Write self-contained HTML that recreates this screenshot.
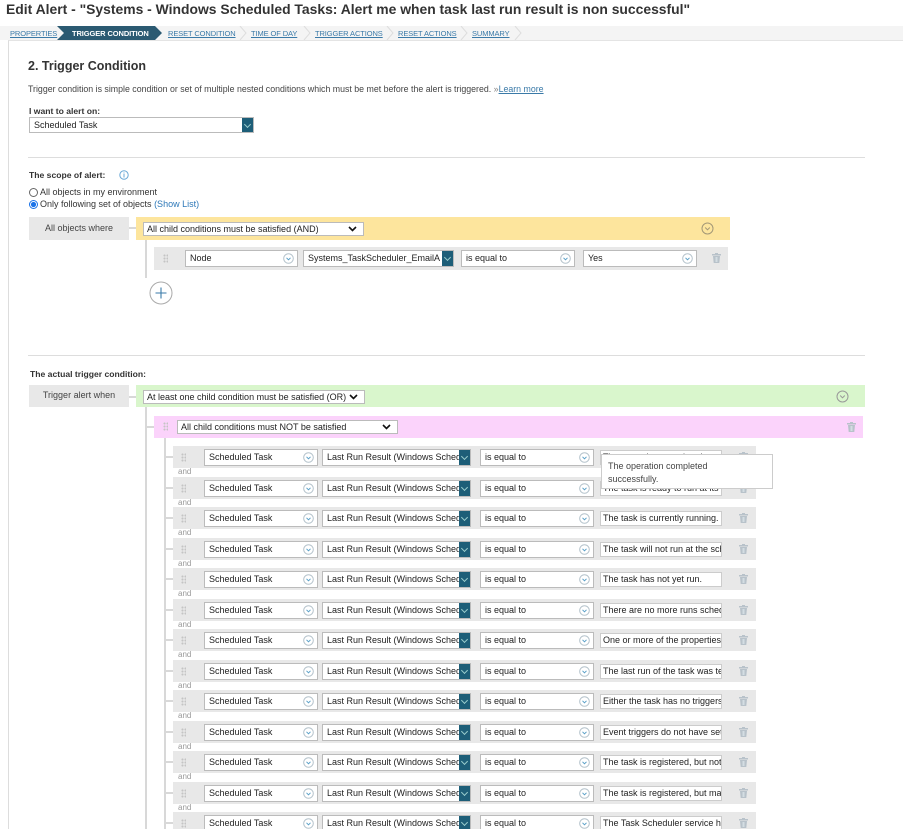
<!DOCTYPE html>
<html><head><meta charset="utf-8">
<style>
*{margin:0;padding:0;box-sizing:border-box}
html,body{width:903px;height:829px;overflow:hidden}
body{background:#fff;font-family:"Liberation Sans",Arial,sans-serif;color:#222;position:relative}
.a{position:absolute}
.t{font-size:9px;white-space:nowrap}
.crumb{position:absolute;top:29px;font-size:7.5px;color:#3a7aa8;text-decoration:underline;white-space:nowrap;letter-spacing:-0.1px}
.sep{position:absolute;top:26px;width:8px;height:14px}
.sel{position:absolute;height:17px;border:1px solid #bbb;background:#fff;font-size:9px;line-height:15px;padding-left:4px;overflow:hidden;white-space:nowrap;color:#222}
.ci{position:absolute;right:3px;top:2px;width:11px;height:11px}
.tb{position:absolute;right:-1px;top:-1px;width:12px;height:17px;background:#1d5e78}
.tb:after{content:"";position:absolute;left:3px;top:5px;width:4px;height:4px;border-right:1px solid #9cc;border-bottom:1px solid #9cc;transform:rotate(45deg)}
.inp{position:absolute;height:15px;border:1px solid #ccc;background:#fff;font-size:9px;line-height:13px;padding-left:2px;overflow:hidden;white-space:nowrap;color:#222}
.row{position:absolute;left:173px;width:583px;height:22px;background:#e8e8e8}
.and{position:absolute;left:178px;font-size:8px;color:#999}
.h{position:absolute;width:5px;height:9px;background-image:radial-gradient(circle,#c4c4c4 1px,transparent 1.1px);background-size:3px 3px}
.tr{position:absolute;width:9px;height:10px}
.vl{position:absolute;background:#d8d8d8;width:2px}
.hl{position:absolute;background:#d8d8d8;height:2px}
.dd{position:absolute;height:14px;border:1px solid #bbb;background:#fff;font-size:9px;line-height:12px;padding-left:3px;white-space:nowrap}
.dd svg{position:absolute;right:6px;top:3px}
</style></head><body>
<svg width="0" height="0" style="position:absolute"><defs>
<g id="c"><circle cx="5.5" cy="5.5" r="4.8" fill="#fff" stroke="#b5c3cc" stroke-width="1"/><path d="M3.5 4.8 L5.5 6.8 L7.5 4.8" fill="none" stroke="#5aa0c8" stroke-width="1"/></g>
<g id="tr"><rect x="0" y="1" width="9" height="1.5" fill="#b8c2ca"/><rect x="3" y="0" width="3" height="1.5" fill="#b8c2ca"/><path d="M1 3 H8 L7.3 10 H1.7 Z" fill="#b8c2ca"/><rect x="3.5" y="4" width="2" height="5" fill="#d4dde3"/></g>
</defs></svg>

<div class="a" style="left:6px;top:1px;font-size:13.9px;font-weight:bold;color:#333;white-space:nowrap">Edit Alert - "Systems - Windows Scheduled Tasks: Alert me when task last run result is non successful"</div>

<div class="a" style="left:0;top:26px;width:903px;height:14px;background:#f4f4f4"></div>
<div class="crumb" style="left:10px">PROPERTIES</div>
<svg class="a" style="left:57px;top:26px" width="110" height="14"><path d="M0 0 H98 L105 7 L98 14 H0 L7 7 Z" fill="#2b5a72"/></svg>
<div class="crumb" style="left:72px;color:#fff;text-decoration:none;font-weight:bold">TRIGGER CONDITION</div>
<div class="crumb" style="left:168px">RESET CONDITION</div>
<svg class="sep" style="left:239px"><path d="M1 0 L7 7 L1 14" fill="none" stroke="#ddd"/></svg>
<div class="crumb" style="left:251px">TIME OF DAY</div>
<svg class="sep" style="left:303px"><path d="M1 0 L7 7 L1 14" fill="none" stroke="#ddd"/></svg>
<div class="crumb" style="left:315px">TRIGGER ACTIONS</div>
<svg class="sep" style="left:386px"><path d="M1 0 L7 7 L1 14" fill="none" stroke="#ddd"/></svg>
<div class="crumb" style="left:398px">RESET ACTIONS</div>
<svg class="sep" style="left:460px"><path d="M1 0 L7 7 L1 14" fill="none" stroke="#ddd"/></svg>
<div class="crumb" style="left:472px">SUMMARY</div>
<svg class="sep" style="left:514px"><path d="M1 0 L7 7 L1 14" fill="none" stroke="#ddd"/></svg>

<div class="a" style="left:8px;top:40px;width:895px;height:789px;border-left:1px solid #ddd;border-top:1px solid #e4e4e4"></div>

<div class="a" style="left:28px;top:59px;font-size:12.5px;font-weight:bold;color:#333">2. Trigger Condition</div>
<div class="a t" style="left:28px;top:84px;color:#444;font-size:8.8px">Trigger condition is simple condition or set of multiple nested conditions which must be met before the alert is triggered. <span style="color:#888">»</span><span style="color:#3a7aa8;text-decoration:underline">Learn more</span></div>
<div class="a t" style="left:29px;top:106px;font-weight:bold;color:#333;font-size:8.6px">I want to alert on:</div>
<div class="sel" style="left:29px;top:117px;width:225px;height:16px">Scheduled Task<div class="tb" style="height:16px"></div></div>

<div class="a" style="left:28px;top:157px;width:837px;height:1px;background:#ddd"></div>
<div class="a t" style="left:29px;top:170px;font-weight:bold;color:#333;font-size:8.6px">The scope of alert:</div>
<svg class="a" style="left:119px;top:170px" width="10" height="10"><circle cx="5" cy="5" r="4.2" fill="none" stroke="#6aa8d6"/><rect x="4.5" y="4" width="1" height="3.5" fill="#6aa8d6"/><rect x="4.5" y="2.5" width="1" height="1" fill="#6aa8d6"/></svg>
<svg class="a" style="left:29px;top:188px" width="9" height="9"><circle cx="4.5" cy="4.5" r="4" fill="#fff" stroke="#666"/></svg>
<div class="a t" style="left:40px;top:187px;color:#333">All objects in my environment</div>
<svg class="a" style="left:29px;top:200px" width="9" height="9"><circle cx="4.5" cy="4.5" r="4" fill="#fff" stroke="#1a73e8"/><circle cx="4.5" cy="4.5" r="2.6" fill="#1a73e8"/></svg>
<div class="a t" style="left:40px;top:199px;color:#333">Only following set of objects <span style="color:#2d78b8">(Show List)</span></div>

<div class="a t" style="left:29px;top:217px;width:100px;height:23px;background:#e8e8e8;text-align:center;line-height:22px;color:#444">All objects where</div>
<div class="hl" style="left:129px;top:227px;width:7px"></div>
<div class="a" style="left:136px;top:217px;width:594px;height:23px;background:#fde59d"></div>
<div class="dd" style="left:143px;top:222px;width:221px">All child conditions must be satisfied (AND)<svg width="9" height="6"><path d="M1 1 L4.5 4.5 L8 1" fill="none" stroke="#111" stroke-width="1.6"/></svg></div>
<svg class="a" style="left:701px;top:222px" width="13" height="13"><circle cx="6.5" cy="6.5" r="5.5" fill="none" stroke="#a39876"/><path d="M4.2 5.5 L6.5 7.8 L8.8 5.5" fill="none" stroke="#a39876"/></svg>
<div class="vl" style="left:145px;top:240px;height:38px"></div>
<div class="a" style="left:154px;top:247px;width:574px;height:23px;background:#e8e8e8"></div>
<div class="h" style="left:163px;top:254px"></div>
<div class="sel" style="left:185px;top:250px;width:113px">Node<svg class="ci"><use href="#c"/></svg></div>
<div class="sel" style="left:303px;top:250px;width:151px">Systems_TaskScheduler_EmailA<div class="tb"></div></div>
<div class="sel" style="left:461px;top:250px;width:114px">is equal to<svg class="ci"><use href="#c"/></svg></div>
<div class="sel" style="left:583px;top:250px;width:114px">Yes<svg class="ci"><use href="#c"/></svg></div>
<svg class="tr" style="left:712px;top:253px"><use href="#tr"/></svg>
<svg class="a" style="left:149px;top:281px" width="24" height="24"><circle cx="12" cy="12" r="11" fill="#fff" stroke="#aaa"/><path d="M12 6.5 V17.5 M6.5 12 H17.5" stroke="#3a7aa8" stroke-width="1.1"/></svg>

<div class="a" style="left:28px;top:355px;width:837px;height:1px;background:#ddd"></div>
<div class="a t" style="left:30px;top:369px;font-weight:bold;color:#333;font-size:8.6px">The actual trigger condition:</div>
<div class="a t" style="left:29px;top:385px;width:100px;height:22px;background:#e8e8e8;text-align:center;line-height:21px;color:#444">Trigger alert when</div>
<div class="hl" style="left:129px;top:396px;width:7px"></div>
<div class="a" style="left:136px;top:385px;width:729px;height:22px;background:#d9f6cc"></div>
<div class="dd" style="left:143px;top:390px;width:222px">At least one child condition must be satisfied (OR)<svg width="9" height="6"><path d="M1 1 L4.5 4.5 L8 1" fill="none" stroke="#111" stroke-width="1.6"/></svg></div>
<svg class="a" style="left:836px;top:390px" width="13" height="13"><circle cx="6.5" cy="6.5" r="5.5" fill="none" stroke="#999"/><path d="M4.2 5.5 L6.5 7.8 L8.8 5.5" fill="none" stroke="#999"/></svg>
<div class="vl" style="left:145px;top:407px;height:422px"></div>
<div class="hl" style="left:146px;top:426px;width:8px"></div>
<div class="a" style="left:154px;top:416px;width:709px;height:22px;background:#fbd3fb"></div>
<div class="h" style="left:163px;top:422px"></div>
<div class="dd" style="left:177px;top:420px;width:221px">All child conditions must NOT be satisfied<svg width="9" height="6"><path d="M1 1 L4.5 4.5 L8 1" fill="none" stroke="#111" stroke-width="1.6"/></svg></div>
<svg class="tr" style="left:847px;top:422px"><use href="#tr"/></svg>
<div class="vl" style="left:164px;top:438px;height:391px"></div>

<div class="row" style="top:446px"><div class="h" style="left:8px;top:7px"></div><div class="sel" style="left:31px;top:3px;width:114px">Scheduled Task<svg class="ci"><use href="#c"/></svg></div><div class="sel" style="left:149px;top:3px;width:149px">Last Run Result (Windows Sched<div class="tb"></div></div><div class="sel" style="left:307px;top:3px;width:114px">is equal to<svg class="ci"><use href="#c"/></svg></div><div class="inp" style="left:427px;top:4px;width:122px">The operation completed successfully.</div><svg class="tr" style="left:566px;top:6px"><use href="#tr"/></svg></div>
<div class="hl" style="left:165px;top:456px;width:8px"></div>
<div class="and" style="top:467px">and</div>
<div class="row" style="top:476.5px"><div class="h" style="left:8px;top:7px"></div><div class="sel" style="left:31px;top:3px;width:114px">Scheduled Task<svg class="ci"><use href="#c"/></svg></div><div class="sel" style="left:149px;top:3px;width:149px">Last Run Result (Windows Sched<div class="tb"></div></div><div class="sel" style="left:307px;top:3px;width:114px">is equal to<svg class="ci"><use href="#c"/></svg></div><div class="inp" style="left:427px;top:4px;width:122px">The task is ready to run at its next scheduled time.</div><svg class="tr" style="left:566px;top:6px"><use href="#tr"/></svg></div>
<div class="hl" style="left:165px;top:487px;width:8px"></div>
<div class="and" style="top:498px">and</div>
<div class="row" style="top:507px"><div class="h" style="left:8px;top:7px"></div><div class="sel" style="left:31px;top:3px;width:114px">Scheduled Task<svg class="ci"><use href="#c"/></svg></div><div class="sel" style="left:149px;top:3px;width:149px">Last Run Result (Windows Sched<div class="tb"></div></div><div class="sel" style="left:307px;top:3px;width:114px">is equal to<svg class="ci"><use href="#c"/></svg></div><div class="inp" style="left:427px;top:4px;width:122px">The task is currently running.</div><svg class="tr" style="left:566px;top:6px"><use href="#tr"/></svg></div>
<div class="hl" style="left:165px;top:517px;width:8px"></div>
<div class="and" style="top:528px">and</div>
<div class="row" style="top:537.5px"><div class="h" style="left:8px;top:7px"></div><div class="sel" style="left:31px;top:3px;width:114px">Scheduled Task<svg class="ci"><use href="#c"/></svg></div><div class="sel" style="left:149px;top:3px;width:149px">Last Run Result (Windows Sched<div class="tb"></div></div><div class="sel" style="left:307px;top:3px;width:114px">is equal to<svg class="ci"><use href="#c"/></svg></div><div class="inp" style="left:427px;top:4px;width:122px">The task will not run at the scheduled times</div><svg class="tr" style="left:566px;top:6px"><use href="#tr"/></svg></div>
<div class="hl" style="left:165px;top:548px;width:8px"></div>
<div class="and" style="top:559px">and</div>
<div class="row" style="top:568px"><div class="h" style="left:8px;top:7px"></div><div class="sel" style="left:31px;top:3px;width:114px">Scheduled Task<svg class="ci"><use href="#c"/></svg></div><div class="sel" style="left:149px;top:3px;width:149px">Last Run Result (Windows Sched<div class="tb"></div></div><div class="sel" style="left:307px;top:3px;width:114px">is equal to<svg class="ci"><use href="#c"/></svg></div><div class="inp" style="left:427px;top:4px;width:122px">The task has not yet run.</div><svg class="tr" style="left:566px;top:6px"><use href="#tr"/></svg></div>
<div class="hl" style="left:165px;top:578px;width:8px"></div>
<div class="and" style="top:589px">and</div>
<div class="row" style="top:598.5px"><div class="h" style="left:8px;top:7px"></div><div class="sel" style="left:31px;top:3px;width:114px">Scheduled Task<svg class="ci"><use href="#c"/></svg></div><div class="sel" style="left:149px;top:3px;width:149px">Last Run Result (Windows Sched<div class="tb"></div></div><div class="sel" style="left:307px;top:3px;width:114px">is equal to<svg class="ci"><use href="#c"/></svg></div><div class="inp" style="left:427px;top:4px;width:122px">There are no more runs scheduled for this task.</div><svg class="tr" style="left:566px;top:6px"><use href="#tr"/></svg></div>
<div class="hl" style="left:165px;top:609px;width:8px"></div>
<div class="and" style="top:620px">and</div>
<div class="row" style="top:629px"><div class="h" style="left:8px;top:7px"></div><div class="sel" style="left:31px;top:3px;width:114px">Scheduled Task<svg class="ci"><use href="#c"/></svg></div><div class="sel" style="left:149px;top:3px;width:149px">Last Run Result (Windows Sched<div class="tb"></div></div><div class="sel" style="left:307px;top:3px;width:114px">is equal to<svg class="ci"><use href="#c"/></svg></div><div class="inp" style="left:427px;top:4px;width:122px">One or more of the properties that are needed</div><svg class="tr" style="left:566px;top:6px"><use href="#tr"/></svg></div>
<div class="hl" style="left:165px;top:639px;width:8px"></div>
<div class="and" style="top:650px">and</div>
<div class="row" style="top:659.5px"><div class="h" style="left:8px;top:7px"></div><div class="sel" style="left:31px;top:3px;width:114px">Scheduled Task<svg class="ci"><use href="#c"/></svg></div><div class="sel" style="left:149px;top:3px;width:149px">Last Run Result (Windows Sched<div class="tb"></div></div><div class="sel" style="left:307px;top:3px;width:114px">is equal to<svg class="ci"><use href="#c"/></svg></div><div class="inp" style="left:427px;top:4px;width:122px">The last run of the task was terminated by the user.</div><svg class="tr" style="left:566px;top:6px"><use href="#tr"/></svg></div>
<div class="hl" style="left:165px;top:670px;width:8px"></div>
<div class="and" style="top:681px">and</div>
<div class="row" style="top:690px"><div class="h" style="left:8px;top:7px"></div><div class="sel" style="left:31px;top:3px;width:114px">Scheduled Task<svg class="ci"><use href="#c"/></svg></div><div class="sel" style="left:149px;top:3px;width:149px">Last Run Result (Windows Sched<div class="tb"></div></div><div class="sel" style="left:307px;top:3px;width:114px">is equal to<svg class="ci"><use href="#c"/></svg></div><div class="inp" style="left:427px;top:4px;width:122px">Either the task has no triggers or the existing</div><svg class="tr" style="left:566px;top:6px"><use href="#tr"/></svg></div>
<div class="hl" style="left:165px;top:700px;width:8px"></div>
<div class="and" style="top:711px">and</div>
<div class="row" style="top:720.5px"><div class="h" style="left:8px;top:7px"></div><div class="sel" style="left:31px;top:3px;width:114px">Scheduled Task<svg class="ci"><use href="#c"/></svg></div><div class="sel" style="left:149px;top:3px;width:149px">Last Run Result (Windows Sched<div class="tb"></div></div><div class="sel" style="left:307px;top:3px;width:114px">is equal to<svg class="ci"><use href="#c"/></svg></div><div class="inp" style="left:427px;top:4px;width:122px">Event triggers do not have set run times.</div><svg class="tr" style="left:566px;top:6px"><use href="#tr"/></svg></div>
<div class="hl" style="left:165px;top:731px;width:8px"></div>
<div class="and" style="top:742px">and</div>
<div class="row" style="top:751px"><div class="h" style="left:8px;top:7px"></div><div class="sel" style="left:31px;top:3px;width:114px">Scheduled Task<svg class="ci"><use href="#c"/></svg></div><div class="sel" style="left:149px;top:3px;width:149px">Last Run Result (Windows Sched<div class="tb"></div></div><div class="sel" style="left:307px;top:3px;width:114px">is equal to<svg class="ci"><use href="#c"/></svg></div><div class="inp" style="left:427px;top:4px;width:122px">The task is registered, but not all specified</div><svg class="tr" style="left:566px;top:6px"><use href="#tr"/></svg></div>
<div class="hl" style="left:165px;top:761px;width:8px"></div>
<div class="and" style="top:772px">and</div>
<div class="row" style="top:781.5px"><div class="h" style="left:8px;top:7px"></div><div class="sel" style="left:31px;top:3px;width:114px">Scheduled Task<svg class="ci"><use href="#c"/></svg></div><div class="sel" style="left:149px;top:3px;width:149px">Last Run Result (Windows Sched<div class="tb"></div></div><div class="sel" style="left:307px;top:3px;width:114px">is equal to<svg class="ci"><use href="#c"/></svg></div><div class="inp" style="left:427px;top:4px;width:122px">The task is registered, but may fail to start</div><svg class="tr" style="left:566px;top:6px"><use href="#tr"/></svg></div>
<div class="hl" style="left:165px;top:792px;width:8px"></div>
<div class="and" style="top:803px">and</div>
<div class="row" style="top:812px"><div class="h" style="left:8px;top:7px"></div><div class="sel" style="left:31px;top:3px;width:114px">Scheduled Task<svg class="ci"><use href="#c"/></svg></div><div class="sel" style="left:149px;top:3px;width:149px">Last Run Result (Windows Sched<div class="tb"></div></div><div class="sel" style="left:307px;top:3px;width:114px">is equal to<svg class="ci"><use href="#c"/></svg></div><div class="inp" style="left:427px;top:4px;width:122px">The Task Scheduler service has asked</div><svg class="tr" style="left:566px;top:6px"><use href="#tr"/></svg></div>
<div class="hl" style="left:165px;top:822px;width:8px"></div>

<div class="a" style="left:601px;top:454px;width:172px;height:35px;background:#fff;border:1px solid #ccc;font-size:9px;color:#444;padding:5px 0 0 6px;line-height:13px">The operation completed<br>successfully.</div>
</body></html>
